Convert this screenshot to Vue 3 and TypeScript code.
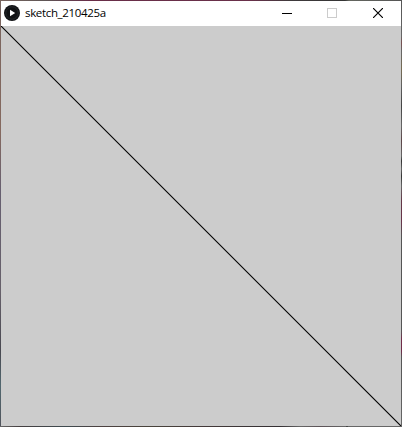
<script setup lang="ts">
const title = 'sketch_210425a'
const canvasSize = 400
</script>

<template>
  <div class="frame">
    <div class="edge top"></div>
    <div class="edge left"></div>
    <main class="window">
      <header class="titlebar">
        <svg class="logo" width="16" height="16" viewBox="0 0 16 16">
          <circle cx="8" cy="8" r="8" fill="#111214" />
          <circle cx="8" cy="8" r="6.2" fill="none" stroke="#24272a" stroke-width="1" />
          <path d="M6 4.8 11.2 8 6 11.2Z" fill="#fff" />
        </svg>
        <span class="title">{{ title }}</span>
        <div class="controls">
          <button class="control minimize" aria-label="Minimize">
            <svg width="10" height="10" viewBox="0 0 10 10" shape-rendering="crispEdges">
              <path d="M0 5.5H10" stroke="#000" />
            </svg>
          </button>
          <button class="control" aria-label="Maximize" disabled>
            <svg width="10" height="10" viewBox="0 0 10 10">
              <rect x="0.5" y="0.5" width="9" height="9" fill="none" stroke="#ccc" />
            </svg>
          </button>
          <button class="control" aria-label="Close">
            <svg width="10" height="10" viewBox="0 0 10 10">
              <path d="M0 0 10 10M10 0 0 10" stroke="#000" stroke-width="1.15" />
            </svg>
          </button>
        </div>
      </header>
      <svg class="canvas" :width="canvasSize" :height="canvasSize" :viewBox="`0 0 ${canvasSize} ${canvasSize}`">
        <line x1="0" y1="0" :x2="canvasSize" :y2="canvasSize" stroke="#000" stroke-width="1.1" />
      </svg>
    </main>
    <div class="edge right"></div>
    <div class="edge bottom"></div>
  </div>
</template>

<style>
body {
  overflow: hidden;
}
</style>

<style scoped>
.frame {
  display: grid;
  grid-template-columns: 1px 400px 1px;
  grid-template-rows: 1px 425px 1px;
  width: 402px;
  height: 427px;
}
.top {
  grid-column: 1 / -1;
  background: linear-gradient(90deg, #79655f 0, #5f5656 45px, #682d48 90px, #69304a 250px, #3f3a3c 290px, #343434 345px, #64665f 349px, #555 402px);
}
.left {
  background: linear-gradient(180deg, #79655f 0, #85695f 130px, #665f70 190px, #66606a 290px, #484850 350px, #526870 385px, #50535b 425px);
}
.right {
  background: linear-gradient(180deg, #555 0, #666 35px, #774f4f 42px, #666 50px, #766b52 68px, #606060 85px, #444 105px, #666 125px, #5c4547 140px, #666 155px, #333 160px, #666 168px, #333 175px, #666 185px, #633747 200px, #683449 220px, #555 235px, #555 330px, #702d49 338px, #702d49 350px, #555 356px, #666 425px);
}
.bottom {
  grid-column: 1 / -1;
  background: linear-gradient(90deg, #666 0, #453f40 20px, #3f4b50 65px, #4d4141 100px, #49443c 145px, #443a3a 200px, #343033 280px, #666 300px, #5c5357 320px, #666 346px, #222 347px, #666 348px, #666 402px);
}
.window {
  display: flex;
  flex-direction: column;
}
.titlebar {
  display: flex;
  align-items: flex-start;
  height: 25px;
  padding-left: 3px;
  box-sizing: border-box;
  background: #fff;
}
.logo {
  flex: none;
  margin-top: 4px;
}
.title {
  margin: 4px 0 0 5px;
  font: 11.5px/16px "Open Sans", "Noto Sans", sans-serif;
  letter-spacing: -0.34px;
  color: #000;
  white-space: nowrap;
}
.controls {
  display: flex;
  margin-left: auto;
}
.control {
  display: flex;
  align-items: center;
  justify-content: center;
  width: 46px;
  height: 24px;
  padding: 0;
  border: 0;
  background: transparent;
}
.minimize {
  width: 44px;
}
.canvas {
  display: block;
  background: #ccc;
}
</style>
